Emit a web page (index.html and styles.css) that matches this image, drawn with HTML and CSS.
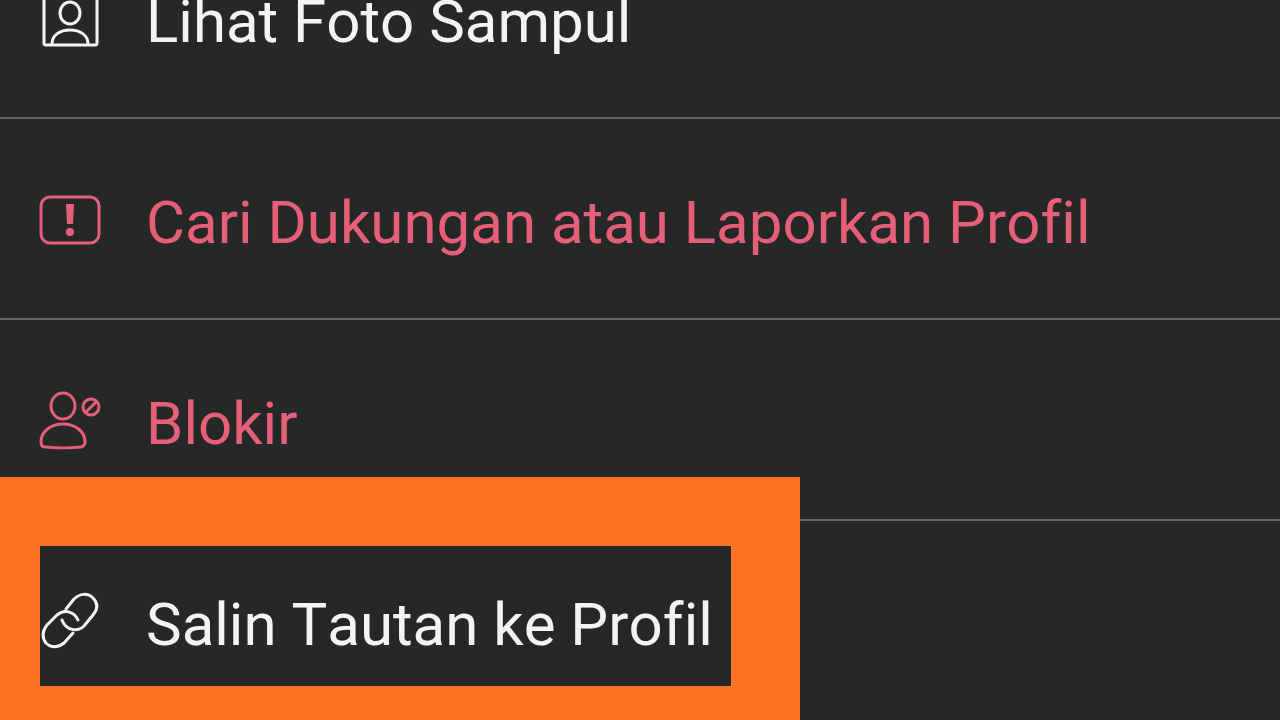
FILE: index.html
```html
<!DOCTYPE html>
<html lang="id">
<head>
    <meta charset="UTF-8">
    <meta name="viewport" content="width=device-width, initial-scale=1.0">
    <title>Pengaturan Profil</title>
    <link rel="stylesheet" href="styles.css">
</head>
<body>
    <ul class="menu">
        <li class="menu-row">
            <button type="button" class="menu-item">
                <svg class="icon" viewBox="0 0 64 64" aria-hidden="true">
                    <rect x="6" y="5" width="53" height="54" rx="2"/>
                    <ellipse cx="32" cy="27" rx="10" ry="11"/>
                    <path d="M14 58c0-9 8-14 18-14s18 5 18 14"/>
                </svg>
                <span class="label">Lihat Foto Sampul</span>
            </button>
        </li>
        <li class="menu-row">
            <button type="button" class="menu-item danger">
                <svg class="icon" viewBox="0 0 64 64" aria-hidden="true">
                    <rect x="3" y="10" width="58" height="46" rx="9"/>
                    <path class="solid" d="M28 17h8l-1 20h-6z"/>
                    <circle class="solid" cx="32" cy="45" r="4"/>
                </svg>
                <span class="label">Cari Dukungan atau Laporkan Profil</span>
            </button>
        </li>
        <li class="menu-row">
            <button type="button" class="menu-item danger">
                <svg class="icon" viewBox="0 0 64 64" aria-hidden="true">
                    <ellipse cx="25" cy="18" rx="12" ry="13"/>
                    <path d="M7 59c-3 0-4-2-4-5 0-10 9-18 22-18s22 8 22 18c0 3-1 4-4 5-9 1-27 1-36 0z"/>
                    <circle cx="53" cy="19" r="8"/>
                    <path d="M48 24l10-10"/>
                </svg>
                <span class="label">Blokir</span>
            </button>
        </li>
        <li class="menu-row">
            <button type="button" class="menu-item">
                <svg class="icon" viewBox="0 0 64 64" aria-hidden="true">
                    <path d="M28 20l8-10c6-6 14-6 19-1s5 11 0 17L46 37c-6 6-18 5-22-6"/>
                    <path d="M40 31c-4-9-14-11-21-5L9 36c-5 6-5 13-1 18 5 5 12 5 18 0l9-10"/>
                </svg>
                <span class="label">Salin Tautan ke Profil</span>
            </button>
            <div class="highlight"></div>
        </li>
    </ul>
</body>
</html>
```

FILE: styles.css
```css
body {
    margin: 0;
    height: 100vh;
    overflow: hidden;
    background-color: #262727;
    font-family: Roboto, 'Liberation Sans', sans-serif;
    color: #f4f4f4;
}

.menu {
    list-style: none;
    margin: -82px 0 0;
    padding: 0;
}

.menu-row {
    position: relative;
    border-bottom: 2px solid #666666;
}

.menu-row:last-child {
    border-bottom: none;
}

.menu-item {
    display: flex;
    align-items: center;
    gap: 44px;
    width: 100%;
    padding: 60px 38px;
    border: none;
    background: none;
    color: inherit;
    font-family: inherit;
    font-size: 60px;
    line-height: 71px;
    font-variant-ligatures: none;
    font-kerning: none;
    text-align: left;
    white-space: nowrap;
    cursor: pointer;
}

.label {
    padding-top: 8px;
}

.danger {
    color: #e65f78;
}

.icon {
    flex: none;
    width: 64px;
    height: 64px;
    fill: none;
    stroke: currentColor;
    stroke-width: 3;
    stroke-linecap: round;
    stroke-linejoin: round;
}

.icon .solid {
    fill: currentColor;
    stroke: none;
}

/* Marco naranja sobre la última opción */
.highlight {
    position: absolute;
    top: -44px;
    left: 0;
    width: 691px;
    height: 140px;
    border: 69px solid #ff7424;
    border-left-width: 40px;
    pointer-events: none;
}
```
